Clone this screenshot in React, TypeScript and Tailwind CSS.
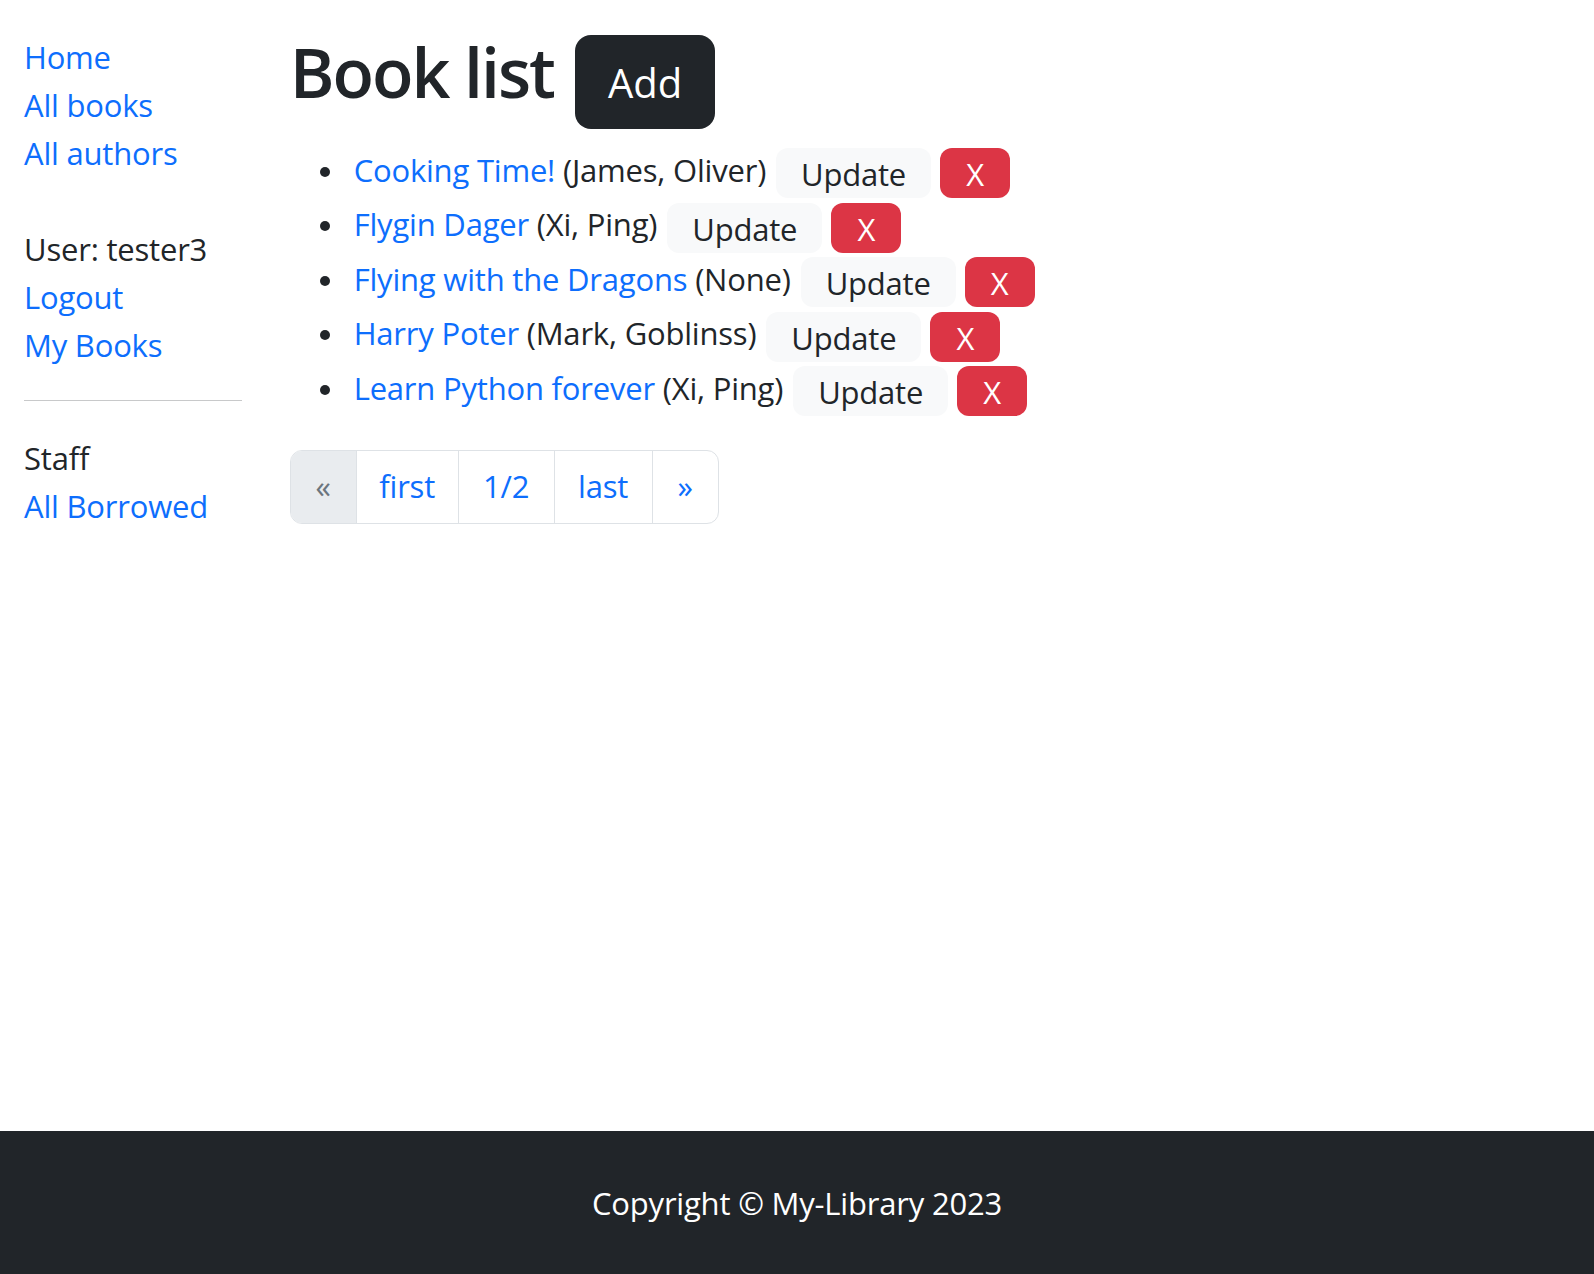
import React from "react";

const books = [
  { title: "Cooking Time!", author: "(James, Oliver)" },
  { title: "Flygin Dager", author: "(Xi, Ping)" },
  { title: "Flying with the Dragons", author: "(None)" },
  { title: "Harry Poter", author: "(Mark, Goblinss)" },
  { title: "Learn Python forever", author: "(Xi, Ping)" },
];

export default function App() {
  return (
    <div
      className="min-h-screen flex flex-col bg-white text-[#212529] text-[31px] tracking-[-0.2px]"
      style={{ fontFamily: '"Open Sans", "Noto Sans", sans-serif' }}
    >
      <div className="flex flex-1">
        <aside className="w-[265.67px] shrink-0 px-[24px] pt-[33px]">
          <div className="flex flex-col leading-[48px]">
            <a className="h-[48px] text-[#0d6efd]">Home</a>
            <a className="h-[48px] text-[#0d6efd]">All books</a>
            <a className="h-[48px] text-[#0d6efd]">All authors</a>
            <div className="h-[48px]" />
            <span className="h-[48px]">User: tester3</span>
            <a className="h-[48px] text-[#0d6efd]">Logout</a>
            <a className="h-[48px] text-[#0d6efd]">My Books</a>
          </div>
          <hr className="mt-[31px] mb-[33px] border-0 border-t border-[#c8c9ca]" />
          <div className="flex flex-col leading-[48px]">
            <span className="h-[48px]">Staff</span>
            <a className="h-[48px] text-[#0d6efd]">All Borrowed</a>
          </div>
        </aside>
        <main className="flex-1 px-[24px] pt-[35px]">
          <div className="flex items-baseline">
            <h1 className="text-[68px] leading-none font-semibold tracking-[-2px]">Book list</h1>
            <a className="ml-[21px] h-[94px] w-[140px] flex items-center justify-center rounded-[16px] bg-[#212529] text-white text-[40px] leading-[60px] pt-[2px] tracking-normal">
              Add
            </a>
          </div>
          <ul className="mt-[17px]">
            {books.map((b) => (
              <li key={b.title} className="flex items-center h-[54.5px]">
                <span className="w-[64px] shrink-0 flex">
                  <span className="ml-[30px] mb-[3px] w-[10px] h-[10px] rounded-full bg-[#212529]" />
                </span>
                <span className="mb-[7px] whitespace-pre leading-[48px]">
                  <a className="text-[#0d6efd]">{b.title}</a> {b.author}
                </span>
                <button className="ml-[10px] h-[50px] w-[155px] rounded-[12px] bg-[#f8f9fa] text-[#212529] leading-[48px] pt-[2px]">
                  Update
                </button>
                <button className="ml-[9px] h-[50px] w-[70px] rounded-[12px] bg-[#dc3545] text-white leading-[48px] pt-[2px]">
                  X
                </button>
              </li>
            ))}
          </ul>
          <div className="mt-[31px] inline-flex h-[74px] border border-[#dee2e6] rounded-[12px] overflow-hidden divide-x divide-[#dee2e6]">
            <span className="w-[66px] flex items-center justify-center bg-[#e9ecef] text-[#6c757d]">«</span>
            <a className="w-[102px] flex items-center justify-center text-[#0d6efd]">first</a>
            <a className="w-[96px] flex items-center justify-center text-[#0d6efd]">1/2</a>
            <a className="w-[98px] flex items-center justify-center text-[#0d6efd]">last</a>
            <a className="w-[65px] flex items-center justify-center text-[#0d6efd]">»</a>
          </div>
        </main>
      </div>
      <footer className="h-[143px] bg-[#212529] text-white flex items-center justify-center pt-[2px]">
        Copyright © My-Library 2023
      </footer>
    </div>
  );
}
